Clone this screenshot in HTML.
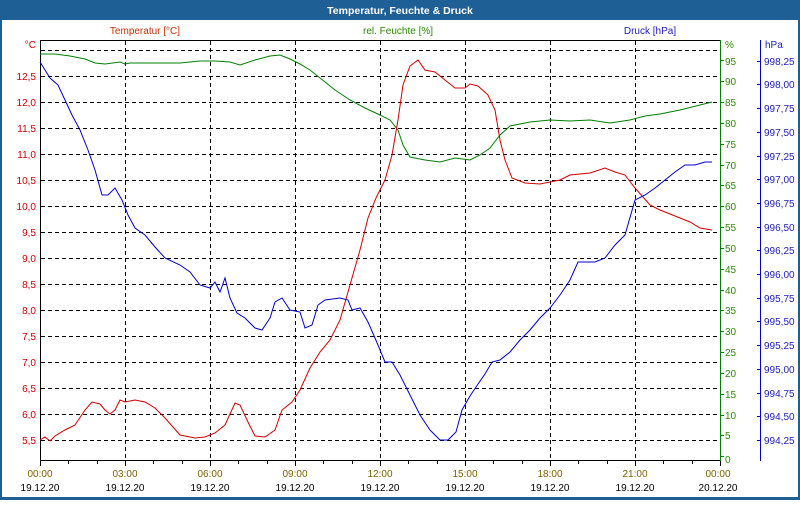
<!DOCTYPE html><html><head><meta charset="utf-8"><style>
body{margin:0;width:800px;height:500px;overflow:hidden;background:#fff;font-family:"Liberation Sans",sans-serif}
</style></head><body>
<svg width="800" height="500" xmlns="http://www.w3.org/2000/svg" font-family="Liberation Sans, sans-serif" font-size="10">
<rect x="0" y="0" width="800" height="500" fill="#1e5f96"/>
<rect x="2" y="20" width="796" height="477" fill="#fff"/>
<text x="400" y="14" fill="#fff" font-weight="bold" font-size="10.5" text-anchor="middle">Temperatur, Feuchte &amp; Druck</text>
<text x="145" y="34" fill="#c83000" text-anchor="middle">Temperatur [°C]</text>
<text x="398" y="34" fill="#2a8a00" text-anchor="middle">rel. Feuchte [%]</text>
<text x="650" y="34" fill="#2020c0" text-anchor="middle">Druck [hPa]</text>
<g stroke="#000" stroke-dasharray="4,3" stroke-width="1">
<path d="M41 50.5H720M41 76.5H720M41 102.5H720M41 128.5H720M41 154.5H720M41 180.5H720M41 206.5H720M41 232.5H720M41 258.5H720M41 284.5H720M41 310.5H720M41 336.5H720M41 362.5H720M41 388.5H720M41 414.5H720M41 440.5H720"/>
<path d="M125.5 41V460M210.5 41V460M295.5 41V460M380.5 41V460M465.5 41V460M550.5 41V460M635.5 41V460"/>
</g>
<path d="M40 40.5H721M40.5 40V461M40 460.5H721" stroke="#000" fill="none"/>
<path d="M40.5 460V466M68.5 460V464M97.5 460V464M125.5 460V466M153.5 460V464M182.5 460V464M210.5 460V466M238.5 460V464M267.5 460V464M295.5 460V466M323.5 460V464M352.5 460V464M380.5 460V466M408.5 460V464M437.5 460V464M465.5 460V466M493.5 460V464M522.5 460V464M550.5 460V466M578.5 460V464M607.5 460V464M635.5 460V466M663.5 460V464M692.5 460V464M720.5 460V466" stroke="#000"/>
<path d="M720.5 40V461" stroke="#008000"/>
<path d="M720 60.5h4M720 81.5h4M720 102.5h4M720 123.5h4M720 144.5h4M720 165.5h4M720 185.5h4M720 206.5h4M720 227.5h4M720 248.5h4M720 269.5h4M720 290.5h4M720 310.5h4M720 331.5h4M720 352.5h4M720 373.5h4M720 394.5h4M720 415.5h4M720 435.5h4M720 456.5h4" stroke="#008000"/>
<path d="M760.5 40V461" stroke="#0000c0"/>
<g fill="#d00000" text-anchor="end">
<text x="36" y="48">°C</text><text x="36" y="80">12,5</text><text x="36" y="106">12,0</text><text x="36" y="132">11,5</text><text x="36" y="158">11,0</text><text x="36" y="184">10,5</text><text x="36" y="210">10,0</text><text x="36" y="236">9,5</text><text x="36" y="262">9,0</text><text x="36" y="288">8,5</text><text x="36" y="314">8,0</text><text x="36" y="340">7,5</text><text x="36" y="366">7,0</text><text x="36" y="392">6,5</text><text x="36" y="418">6,0</text><text x="36" y="444">5,5</text>
</g>
<g fill="#2a8a00">
<text x="725" y="48">%</text><text x="725" y="65">95</text><text x="725" y="85">90</text><text x="725" y="106">85</text><text x="725" y="127">80</text><text x="725" y="148">75</text><text x="725" y="169">70</text><text x="725" y="189">65</text><text x="725" y="210">60</text><text x="725" y="231">55</text><text x="725" y="252">50</text><text x="725" y="273">45</text><text x="725" y="294">40</text><text x="725" y="314">35</text><text x="725" y="335">30</text><text x="725" y="356">25</text><text x="725" y="377">20</text><text x="725" y="398">15</text><text x="725" y="419">10</text><text x="725" y="439">5</text><text x="725" y="463">0</text>
</g>
<g fill="#2020c0">
<text x="765" y="48">hPa</text>
<text x="764" y="65">998,25</text><text x="764" y="88">998,00</text><text x="764" y="112">997,75</text><text x="764" y="136">997,50</text><text x="764" y="160">997,25</text><text x="764" y="183">997,00</text><text x="764" y="207">996,75</text><text x="764" y="231">996,50</text><text x="764" y="254">996,25</text><text x="764" y="278">996,00</text><text x="764" y="302">995,75</text><text x="764" y="325">995,50</text><text x="764" y="349">995,25</text><text x="764" y="373">995,00</text><text x="764" y="397">994,75</text><text x="764" y="420">994,50</text><text x="764" y="444">994,25</text>
</g>
<path d="M760 61.5h-3M760 84.5h-3M760 108.5h-3M760 132.5h-3M760 156.5h-3M760 179.5h-3M760 203.5h-3M760 227.5h-3M760 250.5h-3M760 274.5h-3M760 298.5h-3M760 321.5h-3M760 345.5h-3M760 369.5h-3M760 393.5h-3M760 416.5h-3M760 440.5h-3" stroke="#0000c0"/>
<g fill="#000" text-anchor="middle">
<text x="40" y="477" fill="#806000">00:00</text><text x="40" y="491">19.12.20</text>
<text x="125" y="477" fill="#806000">03:00</text><text x="125" y="491">19.12.20</text>
<text x="210" y="477" fill="#806000">06:00</text><text x="210" y="491">19.12.20</text>
<text x="295" y="477" fill="#806000">09:00</text><text x="295" y="491">19.12.20</text>
<text x="380" y="477" fill="#806000">12:00</text><text x="380" y="491">19.12.20</text>
<text x="465" y="477" fill="#806000">15:00</text><text x="465" y="491">19.12.20</text>
<text x="550" y="477" fill="#806000">18:00</text><text x="550" y="491">19.12.20</text>
<text x="635" y="477" fill="#806000">21:00</text><text x="635" y="491">19.12.20</text>
<text x="718" y="477" fill="#806000">00:00</text><text x="718" y="491">20.12.20</text>
</g>
<g fill="none" stroke-width="1">
<polyline stroke="#008000" points="40,54 55,54 70,56 85,59 95,63 105,64 120,62 125,64 130,63 180,63 200,61 215,61 230,62 240,65 255,60 270,56 280,55 290,59 300,64 310,70 320,78 335,90 350,100 365,108 380,115 390,120 398,130 403,145 410,157 425,160 440,162 455,158 470,160 480,155 490,148 500,135 510,126 530,122 550,120 570,121 590,120 610,123 630,120 645,116 660,114 680,110 700,105 712,102"/>
<polyline stroke="#d00000" points="40,440 45,437 50,441 55,436 65,430 75,425 85,410 92,402 100,404 105,410 110,414 115,410 120,400 125,402 135,400 145,402 155,408 165,418 180,435 195,438 205,437 215,433 225,425 235,403 240,405 248,422 255,436 265,437 275,430 282,410 292,402 300,390 310,368 320,352 330,340 340,320 350,285 360,250 368,218 376,198 385,180 392,155 398,120 403,85 410,66 418,60 425,70 435,72 445,80 455,88 465,88 470,84 478,86 488,95 495,110 500,140 505,160 512,178 525,183 540,184 550,182 560,180 570,175 590,173 605,168 615,172 625,175 635,188 650,205 660,210 675,216 690,222 700,228 712,230"/>
<polyline stroke="#0000d0" points="40,62 45,70 50,78 58,85 65,100 72,115 80,130 88,150 95,170 102,195 108,195 115,188 122,200 128,215 135,228 145,235 155,247 165,258 180,265 190,272 200,285 210,288 215,282 220,292 225,278 230,298 237,313 245,318 255,328 262,330 270,318 275,302 282,298 290,310 300,312 305,328 312,325 318,305 325,300 340,298 348,300 352,310 360,308 368,322 378,345 385,362 392,362 400,375 410,395 420,415 430,430 440,440 448,440 456,432 462,410 470,396 478,384 485,374 492,362 500,360 510,352 520,340 530,330 540,318 550,308 560,295 570,280 578,262 585,262 595,262 605,258 615,245 625,235 635,200 645,195 655,188 665,180 675,172 685,165 695,165 705,162 712,162"/>
</g>
</svg>
</body></html>
